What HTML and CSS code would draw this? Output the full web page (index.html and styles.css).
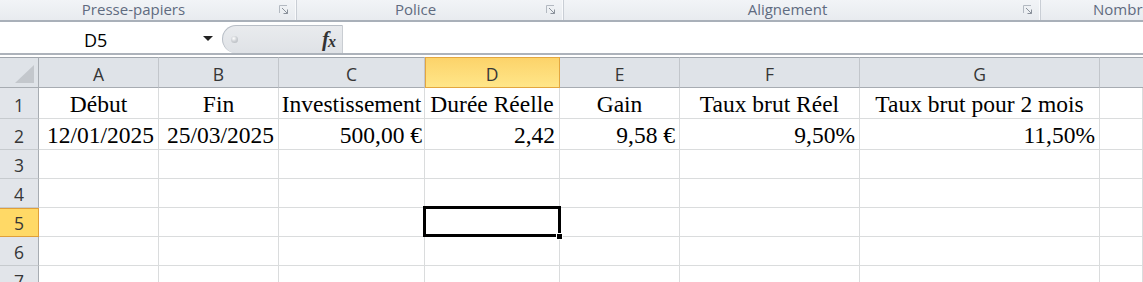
FILE: index.html
```html
<!DOCTYPE html>
<html lang="fr">
<head>
<meta charset="utf-8">
<title>Excel</title>
<link rel="stylesheet" href="styles.css">
</head>
<body>
<div class="app">
  <div class="ribbon">
    <div class="group g-clip">
      <span class="glabel">Presse-papiers</span>
      <span class="launcher"><svg width="10" height="10" viewBox="0 0 10 10"><path d="M0.5 8V0.5H8" stroke="#b3b9c1" fill="none"/><path d="M3 3L8.5 8.5M4.5 8.5H8.5V4.5" stroke="#8a919b" fill="none"/></svg></span>
    </div>
    <div class="group g-font">
      <span class="glabel">Police</span>
      <span class="launcher"><svg width="10" height="10" viewBox="0 0 10 10"><path d="M0.5 8V0.5H8" stroke="#b3b9c1" fill="none"/><path d="M3 3L8.5 8.5M4.5 8.5H8.5V4.5" stroke="#8a919b" fill="none"/></svg></span>
    </div>
    <div class="group g-align">
      <span class="glabel">Alignement</span>
      <span class="launcher"><svg width="10" height="10" viewBox="0 0 10 10"><path d="M0.5 8V0.5H8" stroke="#b3b9c1" fill="none"/><path d="M3 3L8.5 8.5M4.5 8.5H8.5V4.5" stroke="#8a919b" fill="none"/></svg></span>
    </div>
    <div class="group g-num">
      <span class="glabel">Nombre</span>
    </div>
  </div>

  <div class="fbar">
    <div class="namebox">
      <span class="ref">D5</span>
      <span class="arrow"></span>
    </div>
    <div class="pill">
      <span class="dot"></span>
      <span class="fx">f<span class="fx-x">x</span></span>
    </div>
    <div class="finput"></div>
  </div>

  <div class="sheet">
    <div class="corner"><svg width="19" height="18" viewBox="0 0 19 18"><polygon points="19,0 19,18 0,18" fill="#c3c7cc"/></svg></div>
    <div class="ch">A</div>
    <div class="ch">B</div>
    <div class="ch">C</div>
    <div class="ch ch-sel">D</div>
    <div class="ch">E</div>
    <div class="ch">F</div>
    <div class="ch">G</div>
    <div class="ch ch-last"></div>

    <div class="rh">1</div>
    <div class="c center">Début</div>
    <div class="c center">Fin</div>
    <div class="c center">Investissement</div>
    <div class="c center">Durée Réelle</div>
    <div class="c center">Gain</div>
    <div class="c center">Taux brut Réel</div>
    <div class="c center">Taux brut pour 2 mois</div>
    <div class="c"></div>

    <div class="rh">2</div>
    <div class="c right">12/01/2025</div>
    <div class="c right">25/03/2025</div>
    <div class="c right tight">500,00 €</div>
    <div class="c right">2,42</div>
    <div class="c right">9,58 €</div>
    <div class="c right">9,50%</div>
    <div class="c right">11,50%</div>
    <div class="c"></div>

    <div class="rh">3</div>
    <div class="c"></div><div class="c"></div><div class="c"></div><div class="c"></div><div class="c"></div><div class="c"></div><div class="c"></div><div class="c"></div>

    <div class="rh">4</div>
    <div class="c"></div><div class="c"></div><div class="c"></div><div class="c"></div><div class="c"></div><div class="c"></div><div class="c"></div><div class="c"></div>

    <div class="rh rh-sel">5</div>
    <div class="c"></div><div class="c"></div><div class="c"></div>
    <div class="c active"><span class="sel"></span><span class="handle"></span></div>
    <div class="c"></div><div class="c"></div><div class="c"></div><div class="c"></div>

    <div class="rh">6</div>
    <div class="c"></div><div class="c"></div><div class="c"></div><div class="c"></div><div class="c"></div><div class="c"></div><div class="c"></div><div class="c"></div>

    <div class="rh">7</div>
    <div class="c"></div><div class="c"></div><div class="c"></div><div class="c"></div><div class="c"></div><div class="c"></div><div class="c"></div><div class="c"></div>
  </div>
</div>
</body>
</html>
```

FILE: styles.css
```css
* { box-sizing: border-box; }
html, body { margin: 0; padding: 0; background: #fff; }
body { width: 1143px; height: 282px; overflow: hidden; font-family: "Open Sans", "Noto Sans", sans-serif; }

.app { display: flex; flex-direction: column; }

/* Ribbon group labels */
.ribbon {
  height: 22px;
  display: flex;
  background: linear-gradient(#f2f4f7, #e8ebef);
  border-bottom: 2px solid #a9b0b9;
}
.group {
  display: flex;
  align-items: flex-start;
  border-right: 1px solid #c9ced5;
  box-shadow: inset -1px 0 0 #f9fafc;
}
.g-clip { width: 297px; }
.g-font { width: 267px; }
.g-align { width: 477px; }
.g-num { flex: 1; border-right: none; box-shadow: none; padding-left: 52px; overflow: hidden; }
.glabel {
  flex: 1;
  text-align: center;
  font-size: 15px;
  line-height: 18px;
  color: #5f6b80;
  white-space: nowrap;
}
.g-num .glabel { text-align: left; flex: none; }
.launcher {
  width: 10px;
  height: 10px;
  margin: 5px 7px 0 12px;
  display: flex;
}

/* Formula bar */
.fbar {
  height: 33px;
  display: flex;
  border-bottom: 2px solid #adb3bb;
  background: #fff;
}
.namebox {
  width: 222px;
  display: flex;
  align-items: center;
  padding-left: 84px;
  padding-top: 4px;
}
.ref { font-size: 18px; color: #000; line-height: 22px; }
.arrow {
  margin-left: auto;
  margin-right: 9px;
  margin-top: -3px;
  width: 0; height: 0;
  border-left: 5.5px solid transparent;
  border-right: 5.5px solid transparent;
  border-top: 5px solid #222;
}
.pill {
  width: 121px;
  margin-top: 3px;
  display: flex;
  align-items: center;
  background: linear-gradient(#e9ebee, #dfe2e6);
  border: 1px solid #b8bec6;
  border-right: 1px solid #c9cdd2;
  border-bottom: none;
  border-radius: 15px 0 0 15px;
  padding-left: 8px;
}
.dot {
  width: 7px; height: 7px;
  border-radius: 50%;
  background: radial-gradient(circle at 40% 35%, #ffffff 0, #cfd2d6 45%, #afb3b8 100%);
  margin-top: -1px;
}
.fx {
  margin-left: auto;
  margin-right: 6px;
  font-family: "Liberation Serif", serif;
  font-style: italic;
  font-weight: bold;
  font-size: 21px;
  color: #333;
  line-height: 20px;
}
.fx-x { font-size: 16px; position: relative; top: 1px; margin-left: -1px; }
.finput { flex: 1; }

/* Sheet grid */
.sheet {
  margin-top: 2px;
  display: grid;
  grid-template-columns: 39px 120px 120px 146px 135px 120px 180px 240px 1fr;
  grid-template-rows: 31px 31px 31px 29px 29px 29px 29px 29px;
}
.corner {
  background: #dfe3e8;
  border-top: 1px solid #9fa5ac;
  border-right: 1px solid #a7acb2;
  border-bottom: 1px solid #a7acb2;
  display: flex;
  align-items: flex-end;
  justify-content: flex-end;
  padding: 0 4px 4px 0;
}
.ch {
  background: #dfe3e8;
  border-top: 1px solid #9fa5ac;
  border-right: 1px solid #c2c6cb;
  border-bottom: 1px solid #a7acb2;
  display: flex;
  align-items: flex-end;
  justify-content: center;
  padding-bottom: 4px;
  font-size: 17.5px;
  line-height: 18px;
  color: #363636;
}
.ch-last { border-right: none; }
.ch-sel {
  background: linear-gradient(#fcd36a, #ffe689);
  border-top: 1px solid #e3a63f;
  border-right: 1px solid #e3a63f;
  border-bottom: 1px solid #e3a63f;
  box-shadow: inset 1px 0 0 #e3a63f;
}
.rh {
  background: #e2e5ea;
  border-right: 1px solid #a7acb2;
  border-bottom: 1px solid #c6cace;
  display: flex;
  align-items: flex-end;
  justify-content: center;
  padding-bottom: 4px;
  font-size: 17.5px;
  line-height: 18px;
  color: #363636;
}
.rh-sel {
  background: #ffd966;
  border-right: 1px solid #e09f39;
  border-bottom: 1px solid #e09f39;
  box-shadow: inset 0 1px 0 #e09f39;
}
.c {
  position: relative;
  border-right: 1px solid #dadcdd;
  border-bottom: 1px solid #dadcdd;
  display: flex;
  align-items: flex-end;
  padding: 0 4px 2px 4px;
  font-family: "Liberation Serif", "Times New Roman", serif;
  font-size: 23.5px;
  line-height: 24px;
  color: #000;
  white-space: nowrap;
}
.center { justify-content: center; padding-left: 0; padding-right: 0; }
.right { justify-content: flex-end; }
.tight { padding-right: 2px; }
.sel {
  position: absolute;
  left: -2px; top: -2px; right: -2px; bottom: -1px;
  border: 3px solid #000;
  z-index: 2;
}
.handle {
  position: absolute;
  right: -4px; bottom: -4px;
  width: 7px; height: 7px;
  background: #000;
  border: 1px solid #fff;
  z-index: 3;
}
```
